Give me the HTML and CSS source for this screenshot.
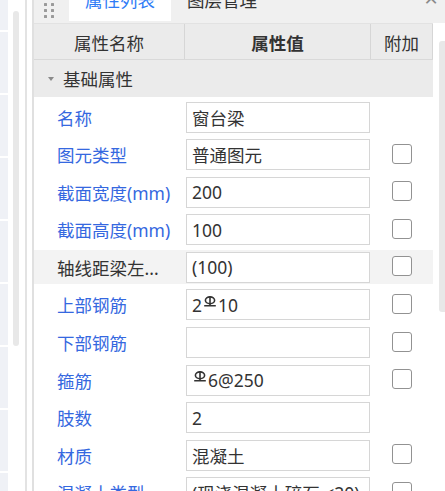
FILE: index.html
```html
<!DOCTYPE html>
<html lang="zh-CN">
<head>
<meta charset="utf-8">
<title>属性列表</title>
<link rel="stylesheet" href="styles.css">
</head>
<body>
<div class="app">
  <div class="dock">
    <div class="strip">
      <div class="blk first"></div>
      <div class="blk"></div>
      <div class="blk"></div>
      <div class="blk"></div>
      <div class="blk"></div>
      <div class="blk"></div>
      <div class="blk"></div>
      <div class="blk"></div>
      <div class="blk"></div>
    </div>
    <div class="vscroll"><div class="thumb"></div></div>
    <div class="divider"></div>
  </div>

  <div class="panel">
    <div class="tabbar">
      <div class="grip"><span></span><span></span><span></span><span></span><span></span><span></span></div>
      <div class="tab active"><span class="tab-label">属性列表</span></div>
      <div class="tab"><span class="tab-label">图层管理</span></div>
      <div class="close">×</div>
    </div>

    <div class="panel-body">
      <div class="grid">
        <div class="head">
          <div class="hcell">属性名称</div>
          <div class="hcell bold">属性值</div>
          <div class="hcell">附加</div>
        </div>
        <div class="group"><span class="caret"></span><span>基础属性</span></div>

        <div class="rows">
          <div class="row">
            <div class="label">名称</div>
            <div class="value"><div class="box">窗台梁</div></div>
            <div class="extra"></div>
          </div>
          <div class="row">
            <div class="label">图元类型</div>
            <div class="value"><div class="box">普通图元</div></div>
            <div class="extra"><span class="check"></span></div>
          </div>
          <div class="row">
            <div class="label">截面宽度(mm)</div>
            <div class="value"><div class="box">200</div></div>
            <div class="extra"><span class="check"></span></div>
          </div>
          <div class="row">
            <div class="label">截面高度(mm)</div>
            <div class="value"><div class="box">100</div></div>
            <div class="extra"><span class="check"></span></div>
          </div>
          <div class="row shaded">
            <div class="label dark">轴线距梁左...</div>
            <div class="value"><div class="box">(100)</div></div>
            <div class="extra"><span class="check"></span></div>
          </div>
          <div class="row">
            <div class="label">上部钢筋</div>
            <div class="value"><div class="box">2<svg class="rebar" viewBox="0 0 14 11" aria-label="三级钢"><ellipse cx="7" cy="4.3" rx="4.6" ry="3.4" fill="none" stroke="#333" stroke-width="1.6"/><path d="M7 0.2V9.8M1.2 9.8H12.8" stroke="#333" stroke-width="1.6" fill="none"/></svg>10</div></div>
            <div class="extra"><span class="check"></span></div>
          </div>
          <div class="row">
            <div class="label">下部钢筋</div>
            <div class="value"><div class="box"></div></div>
            <div class="extra"><span class="check"></span></div>
          </div>
          <div class="row">
            <div class="label">箍筋</div>
            <div class="value"><div class="box"><svg class="rebar" viewBox="0 0 14 11" aria-label="三级钢"><ellipse cx="7" cy="4.3" rx="4.6" ry="3.4" fill="none" stroke="#333" stroke-width="1.6"/><path d="M7 0.2V9.8M1.2 9.8H12.8" stroke="#333" stroke-width="1.6" fill="none"/></svg>6@250</div></div>
            <div class="extra"><span class="check"></span></div>
          </div>
          <div class="row">
            <div class="label">肢数</div>
            <div class="value"><div class="box">2</div></div>
            <div class="extra"></div>
          </div>
          <div class="row">
            <div class="label">材质</div>
            <div class="value"><div class="box">混凝土</div></div>
            <div class="extra"><span class="check"></span></div>
          </div>
          <div class="row">
            <div class="label">混凝土类型</div>
            <div class="value"><div class="box">(现浇混凝土碎石 &lt;20)</div></div>
            <div class="extra"><span class="check"></span></div>
          </div>
        </div>
      </div>
      <div class="rscroll"><div class="rthumb"></div></div>
    </div>
  </div>
</div>
</body>
</html>
```

FILE: styles.css
```css
* { box-sizing: border-box; }

html, body {
  margin: 0;
  padding: 0;
  background: #ffffff;
  overflow: hidden;
}

body {
  font-family: "Noto Sans", "Noto Sans CJK SC", sans-serif;
  font-size: 17.5px;
  color: #333333;
}

.app {
  display: flex;
  width: 445px;
  height: 491px;
  overflow: hidden;
}

/* ---------- left dock ---------- */
.dock {
  display: flex;
  width: 32px;
  flex: none;
}

.strip {
  width: 8px;
  display: flex;
  flex-direction: column;
  gap: 2px;
}

.blk {
  height: 61px;
  flex: none;
  background: #eff1f6;
}

.blk.first { height: 30px; }

.vscroll {
  width: 6px;
  margin-left: 5px;
  padding-top: 11px;
}

.thumb {
  height: 335px;
  background: #e8e8e8;
  border-radius: 3px;
}

.divider {
  width: 2px;
  margin-left: 6px;
  background: #e3e3e3;
}

/* ---------- panel ---------- */
.panel {
  flex: 1;
  border-left: 2px solid #e0e0e0;
  display: flex;
  flex-direction: column;
}

.tabbar {
  height: 23px;
  background: #f0f0f0;
  display: flex;
  align-items: flex-start;
  overflow: hidden;
  flex: none;
}

.grip {
  width: 35px;
  display: grid;
  grid-template-columns: 3px 3px;
  grid-auto-rows: 3px;
  column-gap: 4px;
  row-gap: 3px;
  padding: 3px 0 0 10px;
}

.grip span {
  background: #9a9a9a;
  border-radius: 0.5px;
}

.tab {
  width: 102px;
  height: 21px;
  text-align: center;
  overflow: hidden;
}

.tab-label {
  display: block;
  line-height: 20px;
  margin-top: -10px;
}

.tab.active {
  background: #ffffff;
  color: #2f7cf6;
}

.close {
  margin-left: auto;
  margin-right: 6px;
  width: 16px;
  font-size: 24px;
  line-height: 14px;
  margin-top: -9px;
  color: #8a8a8a;
  text-align: center;
}

.panel-body {
  flex: 1;
  display: flex;
}

.grid {
  width: 399px;
  flex: none;
}

.head {
  display: grid;
  grid-template-columns: 151px 186px 62px;
  height: 37px;
  background: #ebebeb;
  border-top: 1px solid #e2e2e2;
  border-bottom: 1px solid #d9d9d9;
}

.hcell {
  display: flex;
  align-items: center;
  justify-content: center;
  padding-top: 2px;
  border-right: 1px solid #d6d6d6;
}

.hcell.bold { font-weight: bold; }

.group {
  height: 37px;
  background: #ebebeb;
  display: flex;
  align-items: center;
  padding-left: 14px;
  gap: 9px;
}

.caret {
  width: 0;
  height: 0;
  border-left: 3.5px solid transparent;
  border-right: 3.5px solid transparent;
  border-top: 4px solid #8a8a8a;
}

.rows {
  padding-top: 3px;
  display: flex;
  flex-direction: column;
  gap: 3.6px;
}

.row {
  display: grid;
  grid-template-columns: 151px 186px 62px;
  height: 34px;
  flex: none;
  align-items: center;
}

.row.shaded { background: #f3f3f3; }

.label {
  padding-left: 23px;
  color: #3568e0;
  white-space: nowrap;
  overflow: hidden;
}

.label.dark { color: #333333; }

.value {
  padding-left: 1px;
}

.box {
  width: 184px;
  height: 31px;
  border: 1px solid #d6d6d6;
  background: #ffffff;
  padding-left: 5px;
  display: flex;
  align-items: center;
  white-space: nowrap;
  overflow: hidden;
}

.rebar {
  width: 14px;
  height: 11px;
  margin: -7px 1px 0 1px;
  flex: none;
}

.extra {
  display: flex;
  justify-content: center;
  padding-bottom: 2px;
}

.check {
  width: 20px;
  height: 20px;
  border: 1.5px solid #929292;
  border-radius: 3px;
  background: #ffffff;
}

.rscroll {
  width: 12px;
  padding: 18px 0 0 6px;
}

.rthumb {
  height: 271px;
  background: #e8e8e8;
  border-radius: 3px 0 0 3px;
}
```
